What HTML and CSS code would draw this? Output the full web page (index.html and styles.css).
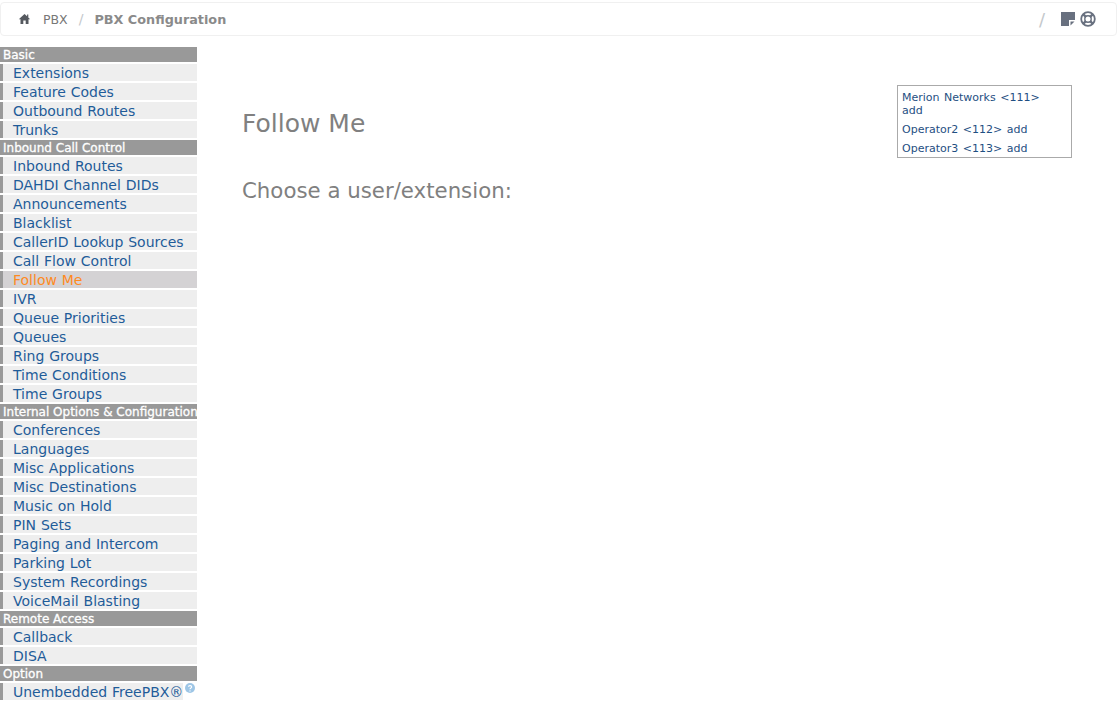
FILE: index.html
```html
<!DOCTYPE html>
<html lang="en">
<head>
	<meta charset="UTF-8">
	<title>Follow Me</title>
	<link rel="stylesheet" href="styles.css">
</head>
<body>
	<!-- breadcrumb -->
	<div class="topbar">
		<svg class="home" viewBox="0 0 12 12" width="13" height="12"><path d="M6 1 L0.3 6.2 H2 V11 H4.8 V7.5 H7.2 V11 H10 V6.2 H11.7 L9.8 4.4 V1.6 H8.6 V3.3 Z" fill="#55595f"/></svg>
		<span class="crumb">PBX</span>
		<span class="sep">/</span>
		<span class="crumb current">PBX Configuration</span>
		<span class="tools">
			<span class="sep">/</span>
			<svg class="note" viewBox="0 0 14 14" width="14" height="14"><path d="M0 0 H14 V8 H8 V14 H0 Z" fill="#68707f"/><path d="M9.5 9.5 H13.5 L9.5 13.5 Z" fill="#68707f"/></svg>
			<svg class="help" viewBox="0 0 16 16" width="16" height="16"><circle cx="8" cy="8" r="6.8" fill="none" stroke="#68707f" stroke-width="1.8"/><circle cx="8" cy="8" r="3.2" fill="none" stroke="#68707f" stroke-width="1.4"/><path d="M3.3 3.3 L5.9 5.9 M12.7 3.3 L10.1 5.9 M3.3 12.7 L5.9 10.1 M12.7 12.7 L10.1 10.1" stroke="#68707f" stroke-width="2.4"/></svg>
		</span>
	</div>
	<div class="page">
		<!-- menu -->
		<div class="nav">
			<div class="cat">Basic</div>
			<a class="item">Extensions</a>
			<a class="item">Feature Codes</a>
			<a class="item">Outbound Routes</a>
			<a class="item">Trunks</a>
			<div class="cat">Inbound Call Control</div>
			<a class="item">Inbound Routes</a>
			<a class="item">DAHDI Channel DIDs</a>
			<a class="item">Announcements</a>
			<a class="item">Blacklist</a>
			<a class="item">CallerID Lookup Sources</a>
			<a class="item">Call Flow Control</a>
			<a class="item active">Follow Me</a>
			<a class="item">IVR</a>
			<a class="item">Queue Priorities</a>
			<a class="item">Queues</a>
			<a class="item">Ring Groups</a>
			<a class="item">Time Conditions</a>
			<a class="item">Time Groups</a>
			<div class="cat">Internal Options &amp; Configuration</div>
			<a class="item">Conferences</a>
			<a class="item">Languages</a>
			<a class="item">Misc Applications</a>
			<a class="item">Misc Destinations</a>
			<a class="item">Music on Hold</a>
			<a class="item">PIN Sets</a>
			<a class="item">Paging and Intercom</a>
			<a class="item">Parking Lot</a>
			<a class="item">System Recordings</a>
			<a class="item">VoiceMail Blasting</a>
			<div class="cat">Remote Access</div>
			<a class="item">Callback</a>
			<a class="item">DISA</a>
			<div class="cat">Option</div>
			<div class="last">
				<a class="item">Unembedded FreePBX®</a>
				<svg class="info" viewBox="0 0 10 10" width="10" height="10"><circle cx="5" cy="5" r="5" fill="#9ec6e6"/><path d="M3.4 3.8 C3.5 2.2 6.7 2.2 6.7 3.9 C6.7 5 5 5 5 6.2" fill="none" stroke="#fff" stroke-width="1.1"/><circle cx="5" cy="7.9" r=".7" fill="#fff"/></svg>
			</div>
		</div>
		<div class="content">
			<div class="users">
				<div class="user">Merion Networks &lt;111&gt; add</div>
				<div class="user">Operator2 &lt;112&gt; add</div>
				<div class="user">Operator3 &lt;113&gt; add</div>
			</div>
			<h2>Follow Me</h2>
			<h3>Choose a user/extension:</h3>
		</div>
	</div>
</body>
</html>
```

FILE: styles.css
```css
* {
	margin: 0;
	padding: 0;
	box-sizing: border-box;
}
body {
	font-family: "DejaVu Sans", Verdana, sans-serif;
	background: #fff;
	padding-top: 2px;
	overflow: hidden;
}
.topbar {
	display: flex;
	align-items: center;
	width: 1117px;
	height: 34px;
	padding-left: 17px;
	border: 1px solid #f0f0f0;
	border-radius: 4px;
	font-size: 12.5px;
	color: #6c757d;
}
.home {
	margin-right: 12px;
}
.sep {
	margin: 0 11px;
	color: #c4c8cc;
	font-size: 14px;
}
.crumb {
	color: #777;
}
.current {
	font-weight: bold;
	font-size: 12.8px;
	color: #8a8a8a;
}
.tools {
	display: flex;
	align-items: center;
	margin-left: auto;
	margin-right: 20px;
}
.tools .sep {
	font-size: 18px;
	margin: 0 16px 0 0;
}
.note {
	margin-right: 5px;
}
.page {
	display: flex;
	margin-top: 11px;
}
.nav {
	width: 197px;
	flex: none;
}
.cat {
	height: 15px;
	line-height: 17px;
	margin-bottom: 2px;
	padding-left: 3px;
	background: #999;
	color: #fff;
	font-size: 12px;
	-webkit-text-stroke: .3px #fff;
	white-space: nowrap;
	overflow: hidden;
}
.item {
	display: block;
	height: 17px;
	line-height: 19px;
	margin-bottom: 2px;
	padding-left: 10px;
	border-left: 3px solid #999;
	background: #eee;
	color: #1f5c99;
	font-size: 14px;
	word-spacing: .4px;
	white-space: nowrap;
	overflow: hidden;
}
.active {
	background: #d4d2d4;
	color: #ff8a1f;
}
.last {
	display: flex;
	align-items: flex-start;
}
.info {
	margin: 0 0 0 2px;
}
.content {
	flex: 1;
	padding: 38px 47px 0 45px;
	color: #808080;
}
.users {
	float: right;
	width: 175px;
	padding: 5px 20px 0 4px;
	border: 1px solid #aaa;
	color: #1f4f82;
	font-size: 11px;
	line-height: 13px;
	word-spacing: 1px;
}
.user {
	margin-bottom: 6px;
}
.user:last-child {
	margin-bottom: 2px;
}
h2 {
	margin-top: 23px;
	font-size: 25px;
	font-weight: normal;
	line-height: 32px;
}
h3 {
	margin-top: 38px;
	font-size: 21.3px;
	font-weight: normal;
	line-height: 26px;
}
```
